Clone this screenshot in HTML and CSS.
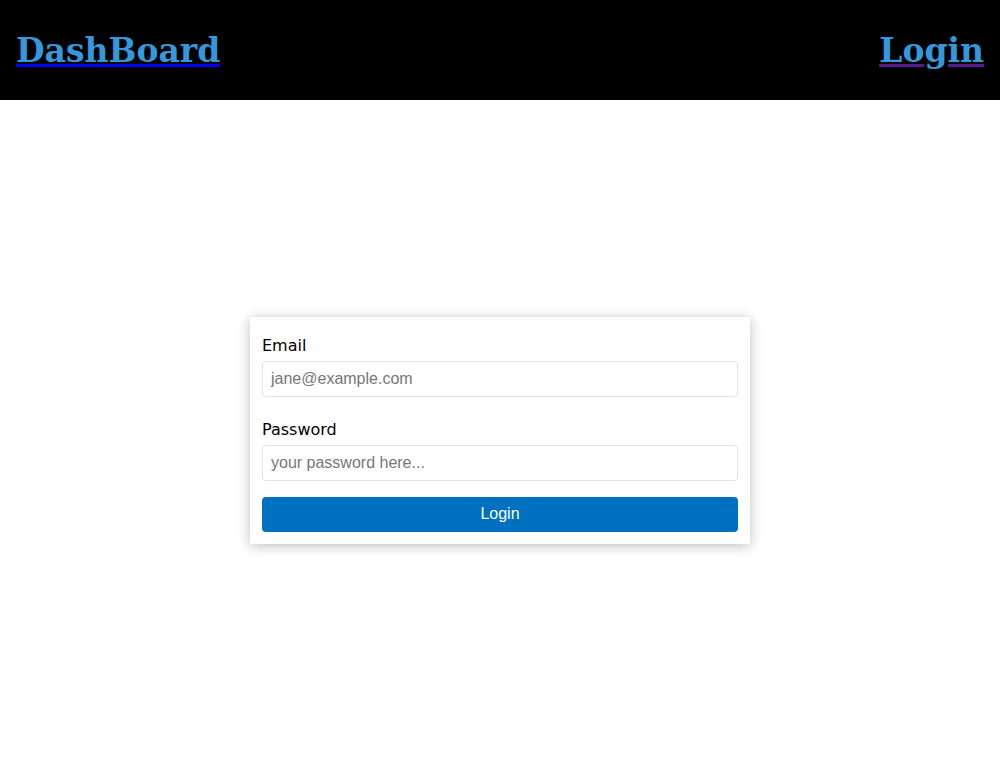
FILE: index.html
```html
<!DOCTYPE html>
<html>
<head>
<meta charset="utf-8">
<link rel="stylesheet" href="styles.css">
</head>
<body>
<header class="topbar">
  <a class="brand" href="#"><span class="nav-text">DashBoard</span></a>
  <a class="nav-link" href="#"><span class="nav-text">Login</span></a>
</header>
<main class="main">
  <form class="card">
    <div class="group">
      <label class="label">Email</label>
      <input class="input" type="email" placeholder="jane@example.com">
    </div>
    <div class="group">
      <label class="label">Password</label>
      <input class="input" type="password" placeholder="your password here...">
    </div>
    <button class="btn" type="button">Login</button>
  </form>
</main>
</body>
</html>
```

FILE: styles.css
```css
html, body {
  margin: 0;
  padding: 0;
  background: #fff;
}
.topbar {
  height: 100px;
  background: #000;
  display: flex;
  align-items: center;
  justify-content: space-between;
  padding: 0 16px;
  box-sizing: border-box;
}
.brand {
  color: #0000ee;
}
.nav-link {
  color: #551a8b;
}
.brand, .nav-link {
  font-family: "DejaVu Serif", serif;
  font-weight: bold;
  font-size: 33px;
  text-decoration: underline;
}
.nav-text {
  color: #3498db;
}
.main {
  height: 660px;
  display: flex;
  align-items: center;
  justify-content: center;
}
.card {
  width: 500px;
  box-sizing: border-box;
  padding: 12px;
  background: #fff;
  box-shadow: 0 2px 12px rgba(0, 0, 0, 0.25);
  display: flex;
  flex-direction: column;
}
.group {
  display: flex;
  flex-direction: column;
  margin-bottom: 16px;
}
.label {
  font-family: "DejaVu Sans", sans-serif;
  font-size: 16px;
  line-height: 19px;
  color: #000;
  margin: 7px 0 6px;
}
.input {
  height: 36px;
  box-sizing: border-box;
  border: 1px solid #e2e2e2;
  border-radius: 4px;
  padding: 0 8px;
  font-family: "Liberation Sans", Arial, sans-serif;
  font-size: 16px;
  color: #333;
  outline: none;
}
.input::placeholder {
  color: #777;
}
.btn {
  height: 35px;
  border: none;
  border-radius: 4px;
  background: #0070c0;
  color: #fff;
  font-family: "Liberation Sans", Arial, sans-serif;
  font-size: 16px;
  cursor: pointer;
}
```
